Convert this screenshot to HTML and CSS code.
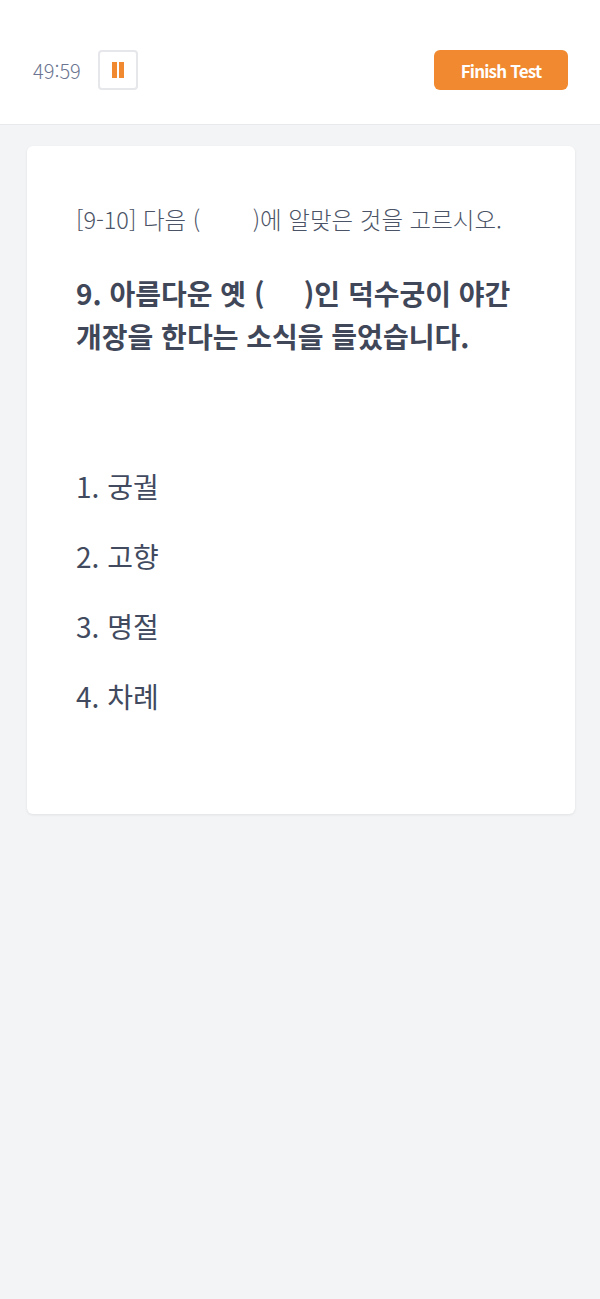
FILE: index.html
```html
<!DOCTYPE html>
<html lang="ko">
<head>
  <meta charset="UTF-8" />
  <meta name="viewport" content="width=device-width, initial-scale=1.0">
  <title>Test</title>
  <link rel="stylesheet" href="styles.css">
</head>
<body>
  <header class="test-header">
    <div class="timer-box">
      <span class="timer">49:59</span>
      <button class="pause-btn" aria-label="Pause">
        <svg width="12" height="16" viewBox="0 0 12 16">
          <rect x="0" y="0" width="5" height="16" fill="#f0892f"/>
          <rect x="7" y="0" width="5" height="16" fill="#f0892f"/>
        </svg>
      </button>
    </div>
    <button class="finish-btn">Finish Test</button>
  </header>

  <main class="test-main">
    <div class="question-card">
      <div class="instruction">[9-10] 다음 (&nbsp;&nbsp;&nbsp;&nbsp;&nbsp;&nbsp;&nbsp;&nbsp;)에 알맞은 것을 고르시오.</div>
      <div class="question">9. 아름다운 옛 (&nbsp;&nbsp;&nbsp;&nbsp;&nbsp;)인 덕수궁이 야간 개장을 한다는 소식을 들었습니다.</div>
      <ul class="options">
        <li>1. 궁궐</li>
        <li>2. 고향</li>
        <li>3. 명절</li>
        <li>4. 차례</li>
      </ul>
    </div>
  </main>
</body>
</html>
```

FILE: styles.css
```css
body {
  margin: 0;
  font-family: "Noto Sans CJK KR", "Noto Sans", sans-serif;
  background: #f3f4f6;
  color: #414a5e;
  min-height: 1299px;
}
.test-header {
  background: #fff;
  display: flex;
  align-items: center;
  justify-content: space-between;
  padding: 50px 32px 34px 33px;
  border-bottom: 1px solid #e8e9ec;
}
.timer-box {
  display: flex;
  align-items: center;
  gap: 17px;
}
.timer {
  font-size: 20px;
  color: #6b7591;
  font-weight: 300;
}
.pause-btn {
  width: 40px;
  height: 40px;
  background: #fff;
  border: 2px solid #e6e7eb;
  border-radius: 4px;
  display: flex;
  align-items: center;
  justify-content: center;
  padding: 0;
  cursor: pointer;
}
.finish-btn {
  width: 134px;
  height: 40px;
  background: #f0892f;
  color: #fff;
  border: none;
  border-radius: 6px;
  font-family: inherit;
  font-size: 17px;
  font-weight: 700;
  letter-spacing: -0.8px;
  cursor: pointer;
}
.test-main {
  padding: 21px 25px 0 27px;
}
.question-card {
  background: #fff;
  border-radius: 6px;
  box-shadow: 0 1px 3px rgba(0, 0, 0, 0.08);
  padding: 57px 48px 98px 49px;
}
.instruction {
  font-size: 23.5px;
  line-height: 32px;
  font-weight: 300;
  color: #4b5366;
}
.question {
  margin-top: 37px;
  font-size: 28px;
  line-height: 43px;
  font-weight: 700;
  color: #3f4759;
}
.options {
  list-style: none;
  margin: 108px 0 0;
  padding: 0;
}
.options li {
  font-size: 28px;
  line-height: 40px;
  font-weight: 400;
  margin-top: 30px;
}
.options li:first-child {
  margin-top: 0;
}
```
